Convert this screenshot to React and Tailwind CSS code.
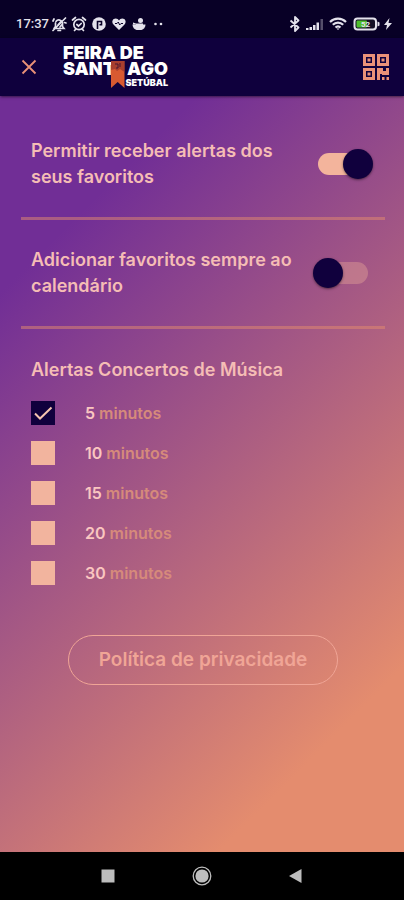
import React, { useState } from 'react';

const initialReminders = [
  { minutes: 5, checked: true },
  { minutes: 10, checked: false },
  { minutes: 15, checked: false },
  { minutes: 20, checked: false },
  { minutes: 30, checked: false },
];

const StatusBar = () => (
  <div className="flex h-[38px] items-end justify-between bg-[#080026] pr-3 pb-1 pl-4 text-[#e4e2ec]">
    <div className="flex h-5 items-center gap-1">
      <span className="font-[Roboto,sans-serif] text-[13px] leading-5 font-medium">17:37</span>
      <div className="-ml-0.5 flex items-center gap-1">
        {/* muted bell */}
        <svg className="h-4 w-4" viewBox="0 0 16 16" fill="none" stroke="currentColor" strokeWidth="1.7" strokeLinecap="round">
          <path d="M4 12.5h9l-1.5-2V7A3.6 3.6 0 0 0 5 5.5M4.5 7v3.5L3 12.5M7 14.5h2.5M2 14.5L14.5 2M2 5l1-2M13.5 6.5l1.5.5" />
          <path d="M7 9l3-3.5M9 11l1.500-2" />
        </svg>
        {/* alarm */}
        <svg className="h-4 w-4" viewBox="0 0 16 16" fill="none" stroke="currentColor" strokeWidth="1.7" strokeLinecap="round">
          <circle cx="8" cy="8.5" r="5.2" />
          <path d="M1.5 4L4.5 1.5M14.5 4l-3-2.5M3.5 14.5l1-1M12.5 14.5l-1-1M5.8 8.5l1.7 1.5 2.7-2.5" />
        </svg>
        <svg className="h-4 w-4" viewBox="0 0 16 16">
          <circle cx="8" cy="8" r="6.8" fill="currentColor" />
          <path d="M6.5 13V5.5h4v3.2H8.5" fill="none" stroke="#080026" strokeWidth="1.6" />
        </svg>
        <svg className="h-4 w-4" viewBox="0 0 16 16">
          <path d="M8 14L2.5 8.5C0 5.5 2 2.5 4.7 2.5c1.5 0 2.6.8 3.3 2 .7-1.2 1.8-2 3.3-2 2.7 0 4.7 3 2.2 6z" fill="currentColor" />
          <path d="M4 7.5h2l1.3-1.5 1.4 3L10 7.5h2" fill="none" stroke="#080026" strokeWidth="1" />
        </svg>
        <svg className="h-4 w-4" viewBox="0 0 16 16" fill="currentColor">
          <path d="M1.5 8.5h13c0 3-2 5-4 5.5h-5c-2-.5-4-2.500-4-5.500z" />
          <circle cx="9.5" cy="4.5" r="2.5" />
          <path d="M5 7.5h7V9H5zM2 6.5l3 1v1H2z" />
        </svg>
        <svg className="h-4 w-3" viewBox="0 0 12 16" fill="currentColor">
          <circle cx="4.5" cy="8" r="1.3" />
          <circle cx="10" cy="8" r="1.3" />
        </svg>
      </div>
    </div>
    <div className="flex h-5 items-center gap-1">
      <svg className="h-4 w-3" viewBox="0 0 12 16" fill="none" stroke="currentColor" strokeWidth="1.8" strokeLinejoin="round">
        <path d="M1.5 4.5l8 7L6 15V1l3.5 3.5-8 7" />
      </svg>
      <svg className="h-4 w-5" viewBox="0 0 20 16" fill="currentColor">
        <path d="M1 12h2.5v2H1zM4.5 11H7v3H4.5zM8 9h2.5v5H8zM11.5 6.5H14V14h-2.500z" />
        <path d="M15.5 3H18v11h-2.5z" opacity=".35" />
      </svg>
      <svg className="h-4 w-[18px]" viewBox="0 0 18 16" fill="none" stroke="currentColor" strokeWidth="2.2">
        <path d="M1 6c4.5-4.5 11.5-4.5 16 0M3.8 8.8c3-3 7.4-3 10.4 0M6.5 11.5c1.5-1.4 3.5-1.4 5 0" />
        <path d="M7.5 12.5h3L9 14z" fill="currentColor" stroke="none" />
      </svg>
      <svg className="ml-0.5 h-4 w-[27px]" viewBox="0 0 27 16">
        <rect x="1.5" y="2.5" width="21.5" height="11" rx="3" fill="#130f25" stroke="currentColor" strokeWidth="2" />
        <path d="M24.5 5.5l2 1v3l-2 1z" fill="currentColor" />
        <rect x="3.5" y="4.5" width="10.5" height="7" rx="1" fill="#4fbf2c" />
        <text x="12.5" y="11" textAnchor="middle" fontFamily="Roboto" fontSize="8" fontWeight="700" fill="#e4e2ec">52</text>
      </svg>
      <svg className="h-3 w-2" viewBox="0 0 8 12" fill="currentColor">
        <path d="M5.5 0L0 7h3l-1 5 6-7H4.5z" />
      </svg>
    </div>
  </div>
);

// The ribbon stands in for the "I" of SANTIAGO
const Logo = () => (
  <div className="relative flex w-[105px] flex-col font-black text-white">
    <span className="text-[18px] leading-4">FEIRA DE</span>
    <span className="flex justify-between text-[18px] leading-4">
      <span>SANT</span>
      <span>AGO</span>
    </span>
    <span className="text-right text-[9px] leading-3">SETÚBAL</span>
    <svg className="absolute top-4 left-[48px] h-[27px] w-[14px]" viewBox="0 0 14 27">
      <path d="M0 0h13.5v27L6.7 21 0 27z" fill="#d85a31" />
      <path d="M0 0h13.5v11L9 8l-3 2-2-2-4 1z" fill="#8e2f2d" opacity=".65" />
      <path d="M4 3h3v4H5M9 2v4" fill="none" stroke="#45152f" strokeWidth="1" />
    </svg>
  </div>
);

const Header = () => (
  <header className="relative flex h-[58px] items-center bg-[#0f003d] pr-[15px] pl-[21px] shadow-sm shadow-black/40">
    <button type="button" aria-label="Fechar" className="text-[#ea9178]">
      <svg className="h-4 w-4" viewBox="0 0 16 16" fill="none" stroke="currentColor" strokeWidth="1.8">
        <path d="M1.5 1.5l13 13M14.5 1.5l-13 13" />
      </svg>
    </button>
    <div className="ml-[26px]">
      <Logo />
    </div>
    <button type="button" aria-label="Código QR" className="ml-auto text-[#ea9178]">
      <svg className="h-[26px] w-[26px]" viewBox="0 0 26 26" fill="currentColor">
        <path fillRule="evenodd" d="M0 0h12v12H0zM3 3v6h6v-6zM14 0h12v12H14zM17 3v6h6v-6zM0 14h12v12H0zM3 17v6h6v-6z" />
        <path d="M4.500 4.500h3v3h-3zM18.500 4.500h3v3h-3zM4.500 18.500h3v3h-3z" />
        <path d="M14 14h6v3h3v-3h3v7h-7v-1h-2v6h-3zM19 23h2.5v3H19zM23.5 23H26v3h-2.5z" />
      </svg>
    </button>
  </header>
);

const SwitchRow = ({ id, label, checked, onChange }) => (
  <div className="flex h-[109px] items-center justify-between border-b-3 border-[#e48c6e]/50 pr-3 pl-[10px]">
    <label htmlFor={id} className="w-[272px] text-[18px] leading-[26px] font-semibold text-[#f5bdb5]">
      {label}
    </label>
    <span className="relative flex h-[30px] w-[60px] shrink-0 items-center justify-center">
      <input
        id={id}
        type="checkbox"
        role="switch"
        checked={checked}
        onChange={onChange}
        className="peer h-[22px] w-[50px] appearance-none rounded-full bg-[#f3b49c]/35 checked:bg-[#f3b49c]"
      />
      <span className="pointer-events-none absolute top-0 left-0 h-[30px] w-[30px] rounded-full bg-[#10003d] shadow shadow-black/40 peer-checked:left-[30px]"></span>
    </span>
  </div>
);

const ReminderOption = ({ minutes, checked, onChange }) => (
  <label className="flex h-10 items-center gap-[30px]">
    <span className="relative h-6 w-6">
      <input
        type="checkbox"
        checked={checked}
        onChange={onChange}
        className="block h-6 w-6 appearance-none bg-[#f2b49e] checked:bg-[#10003d]"
      />
      {checked && (
        <svg className="pointer-events-none absolute inset-0 h-6 w-6" viewBox="0 0 24 24" fill="none" stroke="#f6c4b0" strokeWidth="2">
          <path d="M4 12.5l5 5L20.5 6.5" />
        </svg>
      )}
    </span>
    <span className="text-[16px] leading-6 font-semibold text-[#d68a7b]">
      <span className="text-[#fac6c0]">{minutes}</span> minutos
    </span>
  </label>
);

const NavigationBar = () => (
  <nav className="grid h-12 grid-cols-3 bg-black px-[61px] text-[#bdbdbd]">
    <button type="button" aria-label="Recentes" className="flex items-center justify-center">
      <svg className="h-5 w-5" viewBox="0 0 20 20" fill="currentColor">
        <path d="M3.5 3.5h13v13h-13z" />
      </svg>
    </button>
    <button type="button" aria-label="Início" className="flex items-center justify-center">
      <svg className="h-5 w-5" viewBox="0 0 20 20">
        <circle cx="10" cy="10" r="8.8" fill="none" stroke="currentColor" strokeWidth="1.3" />
        <circle cx="10" cy="10" r="6.6" fill="currentColor" />
      </svg>
    </button>
    <button type="button" aria-label="Voltar" className="flex items-center justify-center">
      <svg className="h-5 w-5" viewBox="0 0 20 20" fill="currentColor">
        <path d="M3 10l12.5-7v14z" />
      </svg>
    </button>
  </nav>
);

const App = () => {
  const [allowAlerts, setAllowAlerts] = useState(true);
  const [addToCalendar, setAddToCalendar] = useState(false);
  const [reminders, setReminders] = useState(initialReminders);

  const toggleReminder = (minutes) => {
    setReminders(prev =>
      prev.map(item => (item.minutes === minutes ? { ...item, checked: !item.checked } : item))
    );
  };

  return (
    <div className="flex min-h-screen flex-col font-[Inter,sans-serif]">
      <StatusBar />
      <Header />
      <main className="grow bg-[linear-gradient(135deg,#712e96_17%,#e48c6e_84%)] pt-[15px] pr-[19px] pb-8 pl-[21px]">
        <SwitchRow
          id="allow-alerts"
          label="Permitir receber alertas dos seus favoritos"
          checked={allowAlerts}
          onChange={() => setAllowAlerts(prev => !prev)}
        />
        <SwitchRow
          id="add-to-calendar"
          label="Adicionar favoritos sempre ao calendário"
          checked={addToCalendar}
          onChange={() => setAddToCalendar(prev => !prev)}
        />

        <fieldset className="pt-7 pl-[10px]">
          <legend className="float-left w-full pb-[10px] text-[18px] leading-[26px] font-semibold text-[#f5bdb5]">
            Alertas Concertos de Música
          </legend>
          <div className="clear-both flex flex-col items-start">
            {reminders.map((item) => (
              <ReminderOption
                key={item.minutes}
                minutes={item.minutes}
                checked={item.checked}
                onChange={() => toggleReminder(item.minutes)}
              />
            ))}
          </div>
        </fieldset>

        <div className="mt-[42px] flex justify-center">
          <a
            href="#privacidade"
            className="rounded-full border border-[#f0a596] px-[30px] py-[11px] text-[19px] leading-[26px] font-semibold text-[#f0a596]"
          >
            Política de privacidade
          </a>
        </div>
      </main>
      <NavigationBar />
    </div>
  );
};

export default App;
